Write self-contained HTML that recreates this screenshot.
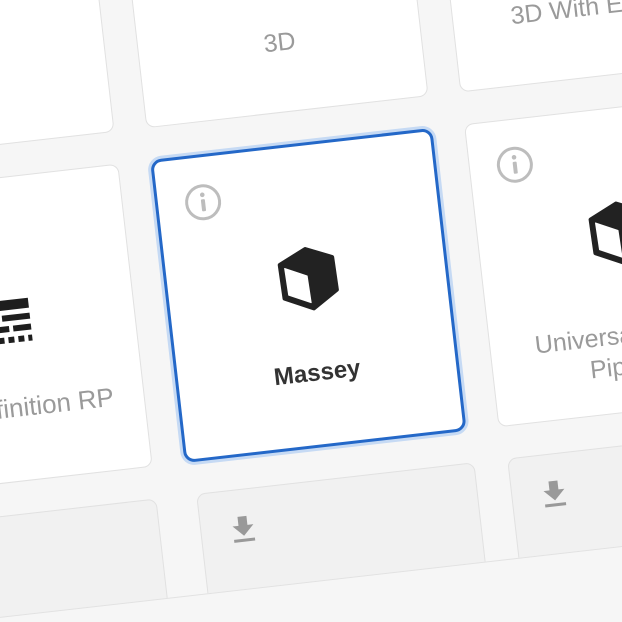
<!DOCTYPE html>
<html><head><meta charset="utf-8"><style>
html,body{margin:0;padding:0;width:622px;height:622px;overflow:hidden;background:#f6f6f6;font-family:"Liberation Sans",sans-serif}
#clip{position:absolute;left:0;top:0;width:622px;height:622px;overflow:hidden}
#w{position:absolute;left:150px;top:160px;width:0;height:0;transform-origin:0 0;transform:rotate(-6.5deg)}
.c{position:absolute;box-sizing:border-box;background:#fff;border:1.5px solid #e1e1e1;border-radius:9px}
.d{background:#f1f1f1}
.l{position:absolute;left:0;right:0;text-align:center;color:#9a9a9a;font-size:25px;line-height:31px}
.sel{border:3px solid #2468c8;box-shadow:0 0 0 3px #c6daf4;border-radius:11px}
.info{position:absolute;left:26px;top:26px}
.cube{position:absolute}
.dl{position:absolute;left:24px;top:22px}
#bp{position:absolute;left:-800px;top:437px;width:2000px;height:200px;background:#f6f6f6;border-top:1.5px solid #e2e2e2}
</style></head><body>
<div id="clip">
<div id="w">
 <div class="c" style="left:-316px;top:-337px;width:284px;height:305px"></div>
 <div class="c" style="left:0;top:-337px;width:284px;height:305px"><div class="l" style="top:219px">3D</div></div>
 <div class="c" style="left:316px;top:-337px;width:284px;height:305px"><div class="l" style="top:219px">3D With Extras</div></div>
 <div class="c" style="left:-316px;top:0;width:284px;height:305px">
  <svg style="position:absolute;left:120px;top:120px" width="64" height="48" viewBox="0 0 64 48">
   <rect x="4" y="2" width="54" height="10" fill="#1e1e1e"/>
   <rect x="4" y="17" width="22" height="6" fill="#1e1e1e"/><rect x="30" y="17" width="28" height="6" fill="#1e1e1e"/>
   <rect x="4" y="28" width="14" height="6" fill="#1e1e1e"/><rect x="22" y="28" width="14" height="6" fill="#1e1e1e"/><rect x="40" y="28" width="18" height="6" fill="#1e1e1e"/>
   <rect x="4" y="39" width="6" height="6" fill="#1e1e1e"/><rect x="14" y="39" width="6" height="6" fill="#1e1e1e"/><rect x="24" y="39" width="6" height="6" fill="#1e1e1e"/><rect x="34" y="39" width="6" height="6" fill="#1e1e1e"/><rect x="44" y="39" width="6" height="6" fill="#1e1e1e"/><rect x="54" y="39" width="4" height="6" fill="#1e1e1e"/>
  </svg>
  <div class="l" style="top:215px;font-size:26px;left:10px">High Definition RP</div>
 </div>
 <div class="c sel" style="left:0;top:0;width:284px;height:305px">
  <svg class="info" width="38" height="38" viewBox="0 0 38 38"><circle cx="19" cy="19" r="16.5" fill="none" stroke="#bdbdbd" stroke-width="3"/><rect x="17" y="16" width="4" height="12" rx="1" fill="#bdbdbd"/><circle cx="19" cy="11.5" r="2.3" fill="#bdbdbd"/></svg>
  <svg class="cube" style="left:110px;top:100px" width="62" height="66" viewBox="0 0 62 66">
   <path d="M31 3 L57 14 L58 47 L33 63 L5 50 L4 16 Z" fill="#222" stroke="#222" stroke-width="4" stroke-linejoin="round"/>
   <path d="M8.5 20 L30 30 L31 57 L9.5 47 Z" fill="#fff" stroke="#fff" stroke-width="1" stroke-linejoin="round"/>
  </svg>
  <div style="position:absolute;left:0;right:0;top:212px;text-align:center;color:#333;font-size:24px;font-weight:bold;line-height:31px">Massey</div>
 </div>
 <div class="c" style="left:316px;top:0;width:284px;height:305px">
  <svg class="info" width="38" height="38" viewBox="0 0 38 38"><circle cx="19" cy="19" r="16.5" fill="none" stroke="#bdbdbd" stroke-width="3"/><rect x="17" y="16" width="4" height="12" rx="1" fill="#bdbdbd"/><circle cx="19" cy="11.5" r="2.3" fill="#bdbdbd"/></svg>
  <svg class="cube" style="left:110px;top:92px" width="62" height="66" viewBox="0 0 62 66">
   <path d="M31 3 L57 14 L58 47 L33 63 L5 50 L4 16 Z" fill="#222" stroke="#222" stroke-width="4" stroke-linejoin="round"/>
   <path d="M8.5 20 L30 30 L31 57 L9.5 47 Z" fill="#fff" stroke="#fff" stroke-width="1" stroke-linejoin="round"/>
  </svg>
  <div class="l" style="top:212px">Universal Render<br>Pipeline</div>
 </div>
 <div class="c d" style="left:-316px;top:337px;width:284px;height:200px"></div>
 <div class="c d" style="left:8px;top:337px;width:280px;height:200px">
  <svg class="dl" width="36" height="36" viewBox="0 0 24 24"><path d="M19 9h-4V3H9v6H5l7 7 7-7zM5 18v2h14v-2H5z" fill="#999"/></svg>
 </div>
 <div class="c d" style="left:321px;top:337px;width:280px;height:200px">
  <svg class="dl" width="36" height="36" viewBox="0 0 24 24"><path d="M19 9h-4V3H9v6H5l7 7 7-7zM5 18v2h14v-2H5z" fill="#999"/></svg>
 </div>
 <div id="bp"></div>
</div>
</div>
</body></html>
